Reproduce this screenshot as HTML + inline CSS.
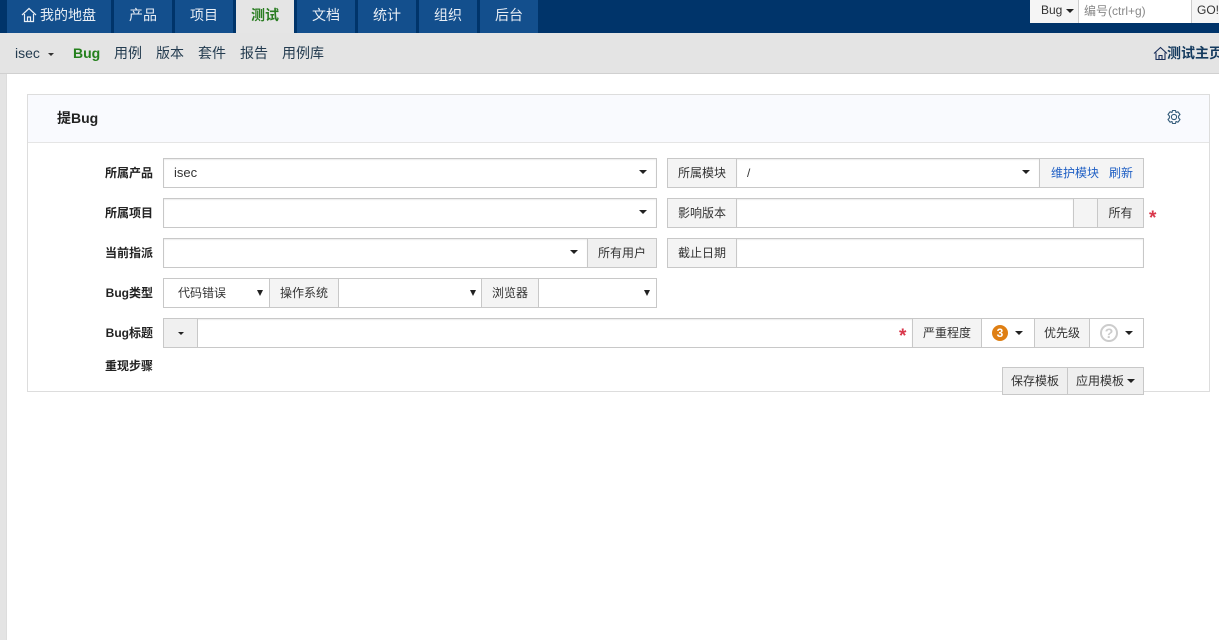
<!DOCTYPE html>
<html><head><meta charset="utf-8"><style>
html,body{margin:0;padding:0;width:1219px;height:640px;overflow:hidden;background:#fff}
body{position:relative;font-family:"Liberation Sans","WenQuanYi Zen Hei","Noto Sans CJK SC",sans-serif;font-size:13px;color:#333}
.a{position:absolute;box-sizing:border-box;white-space:nowrap}
.t{position:absolute;top:0;height:33px;background:#134f8d;color:#e8eef5;font-size:14px;line-height:31px;text-align:center}
.l{position:absolute;font-size:12px;font-weight:bold;color:#222;width:60px;text-align:right;left:93px;line-height:16px}
.n{position:absolute;top:44px;font-size:14px;line-height:18px;color:#243c50}
.b{position:absolute;box-sizing:border-box;height:30px;border:1px solid #c8c8c8;background:#fff;font-size:12px;line-height:29px;color:#333;white-space:nowrap;box-shadow:inset 0 1px 1px rgba(0,0,0,.075)}
.g{background:#f4f4f4;text-align:center;box-shadow:none}
.c{position:absolute;width:0;height:0;border-left:4px solid transparent;border-right:4px solid transparent;border-top:4px solid #222}
.v{position:absolute;width:0;height:0;border-left:3px solid transparent;border-right:3px solid transparent;border-top:6px solid #222}
.s{position:absolute;color:#d9374b;font-size:19px;font-weight:bold;line-height:20px}
</style></head><body>
<div class="a" style="left:0;top:0;width:1219px;height:33px;background:#00346a"></div>
<div class="t" style="left:7px;width:104px"></div>
<svg class="a" style="left:21px;top:7px" width="16" height="16" viewBox="0 0 16 16" fill="none" stroke="#e8eef5" stroke-width="1.2"><path d="M1 8 L8 1.5 L15 8 M3.5 7 V14.5 H12.5 V7 M6.5 14.5 V10 H9.5 V14.5"/></svg>
<div class="a" style="left:40px;top:0;line-height:31px;font-size:14px;color:#e8eef5">我的地盘</div>
<div class="t" style="left:114px;width:58px">产品</div>
<div class="t" style="left:175px;width:58px">项目</div>
<div class="t" style="left:236px;width:58px;background:#e5e5e5;color:#2a7d22;font-weight:bold">测试</div>
<div class="t" style="left:297px;width:58px">文档</div>
<div class="t" style="left:358px;width:58px">统计</div>
<div class="t" style="left:419px;width:58px">组织</div>
<div class="t" style="left:480px;width:58px">后台</div>

<div class="a" style="left:1030px;top:0;width:189px;height:23px;background:#fff"></div>
<div class="a" style="left:1030px;top:0;width:49px;height:23px;background:#f5f5f5;border-right:1px solid #ccc;font-size:12px;line-height:21px;padding-left:11px;color:#333">Bug</div>
<div class="c" style="left:1066px;top:9px"></div>
<div class="a" style="left:1084px;top:0;font-size:12px;line-height:22px;color:#888">编号(ctrl+g)</div>
<div class="a" style="left:1191px;top:0;width:28px;height:23px;background:#f5f5f5;border-left:1px solid #ccc;font-size:12px;line-height:21px;padding-left:5px;color:#333">GO!</div>

<div class="a" style="left:0;top:33px;width:1219px;height:41px;background:#e4e4e4;border-bottom:1px solid #d0d0d0"></div>
<div class="a" style="left:0;top:74px;width:7px;height:566px;background:#e4e4e4;border-right:1px solid #ddd"></div>
<div class="n" style="left:15px">isec</div>
<div class="c" style="left:48px;top:53px;border-left-width:3px;border-right-width:3px;border-top-width:3px;border-top-color:#333"></div>
<div class="n" style="left:73px;color:#24801c;font-weight:bold">Bug</div>
<div class="n" style="left:114px">用例</div>
<div class="n" style="left:156px">版本</div>
<div class="n" style="left:198px">套件</div>
<div class="n" style="left:240px">报告</div>
<div class="n" style="left:282px">用例库</div>
<svg class="a" style="left:1153px;top:46px" width="15" height="15" viewBox="0 0 15 15" fill="none" stroke="#1a2f5a" stroke-width="1.1"><path d="M1 7.5 L7.5 1.5 L14 7.5 M3 6.5 V13.5 H12 V6.5 M6 13.5 V9.5 H9 V13.5"/></svg>
<div class="a" style="left:1167px;top:44px;font-size:14px;line-height:18px;font-weight:bold;color:#143a5e">测试主页</div>

<div class="a" style="left:27px;top:94px;width:1183px;height:298px;border:1px solid #ddd;background:#fff"></div>
<div class="a" style="left:28px;top:95px;width:1181px;height:48px;background:#f9fafe;border-bottom:1px solid #e5e5e5"></div>
<div class="a" style="left:57px;top:109px;font-size:14px;line-height:18px;font-weight:bold;color:#222">提Bug</div>
<svg class="a" style="left:1166px;top:109px" width="16" height="16" viewBox="0 0 16 16" fill="none" stroke="#345b7a" stroke-width="1.1" stroke-linejoin="round"><path d="M6.5 1.5 H9.5 L10 3.5 L12 2.8 L14 5.5 L12.6 7 V9 L14 10.5 L12 13.2 L10 12.5 L9.5 14.5 H6.5 L6 12.5 L4 13.2 L2 10.5 L3.4 9 V7 L2 5.5 L4 2.8 L6 3.5 Z"/><circle cx="8" cy="8" r="2.6"/></svg>

<div class="l" style="top:165px">所属产品</div>
<div class="b" style="left:163px;top:158px;width:494px;padding-left:10px;font-size:13px;line-height:27px">isec</div>
<div class="c" style="left:639px;top:170px"></div>
<div class="b g" style="left:667px;top:158px;width:70px">所属模块</div>
<div class="b" style="left:736px;top:158px;width:304px;padding-left:10px">/</div>
<div class="c" style="left:1022px;top:170px"></div>
<div class="b g" style="left:1039px;top:158px;width:105px;text-align:left;padding-left:11px;color:#1f5fc4">维护模块<span style="margin-left:10px">刷新</span></div>

<div class="l" style="top:205px">所属项目</div>
<div class="b" style="left:163px;top:198px;width:494px"></div>
<div class="c" style="left:639px;top:210px"></div>
<div class="b g" style="left:667px;top:198px;width:70px">影响版本</div>
<div class="b" style="left:736px;top:198px;width:338px"></div>
<div class="b g" style="left:1073px;top:198px;width:25px"></div>
<div class="b g" style="left:1097px;top:198px;width:47px;background:#f0f0f0">所有</div>
<div class="s" style="left:1149px;top:209px">*</div>

<div class="l" style="top:245px">当前指派</div>
<div class="b" style="left:163px;top:238px;width:425px"></div>
<div class="c" style="left:570px;top:250px"></div>
<div class="b g" style="left:587px;top:238px;width:70px;background:#f0f0f0">所有用户</div>
<div class="b g" style="left:667px;top:238px;width:70px">截止日期</div>
<div class="b" style="left:736px;top:238px;width:408px"></div>

<div class="l" style="top:285px">Bug类型</div>
<div class="b" style="left:163px;top:278px;width:107px;padding-left:14px;box-shadow:none">代码错误</div>
<div class="v" style="left:257px;top:290px"></div>
<div class="b g" style="left:269px;top:278px;width:70px">操作系统</div>
<div class="b" style="left:338px;top:278px;width:144px;box-shadow:none"></div>
<div class="v" style="left:470px;top:290px"></div>
<div class="b g" style="left:481px;top:278px;width:58px">浏览器</div>
<div class="b" style="left:538px;top:278px;width:119px;box-shadow:none"></div>
<div class="v" style="left:644px;top:290px"></div>

<div class="l" style="top:325px">Bug标题</div>
<div class="b" style="left:163px;top:318px;width:750px"></div>
<div class="b g" style="left:163px;top:318px;width:35px;background:#f0f0f0"></div>
<div class="c" style="left:178px;top:332px;border-left-width:3px;border-right-width:3px;border-top-width:3px"></div>
<div class="s" style="left:899px;top:327px">*</div>
<div class="b g" style="left:912px;top:318px;width:70px">严重程度</div>
<div class="b" style="left:981px;top:318px;width:54px;box-shadow:none"></div>
<div class="a" style="left:992px;top:325px;width:16px;height:16px;border-radius:50%;background:#df7f13;color:#fff;font-size:12px;font-weight:bold;line-height:16px;text-align:center">3</div>
<div class="c" style="left:1015px;top:331px"></div>
<div class="b g" style="left:1034px;top:318px;width:56px">优先级</div>
<div class="b" style="left:1089px;top:318px;width:55px;box-shadow:none"></div>
<div class="a" style="left:1100px;top:324px;width:18px;height:18px;border-radius:50%;border:2px solid #ccc;color:#ccc;font-size:14px;font-weight:bold;line-height:14px;text-align:center">?</div>
<div class="c" style="left:1125px;top:331px"></div>

<div class="l" style="top:358px">重现步骤</div>
<div class="b" style="left:1002px;top:367px;width:66px;height:28px;background:#efefef;text-align:center;line-height:26px;box-shadow:none">保存模板</div>
<div class="b" style="left:1067px;top:367px;width:77px;height:28px;background:#efefef;padding-left:8px;line-height:26px;box-shadow:none">应用模板</div>
<div class="c" style="left:1127px;top:379px"></div>
</body></html>
